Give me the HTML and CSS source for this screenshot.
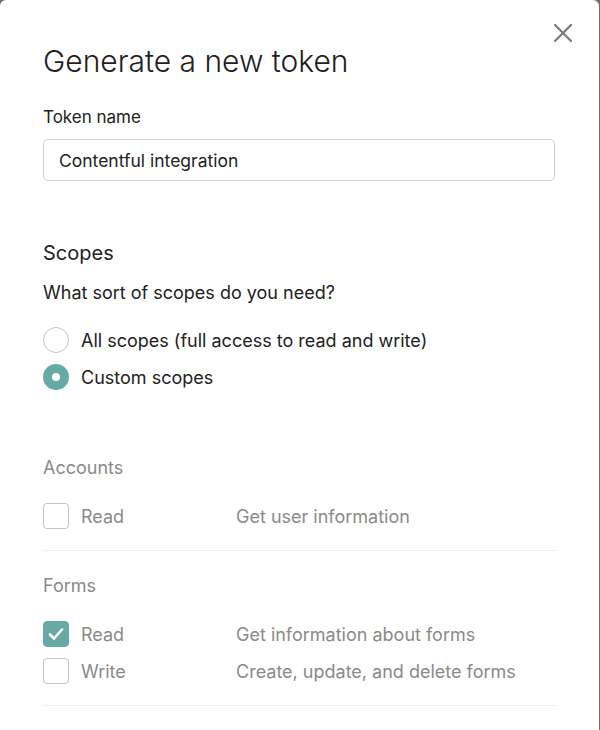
FILE: index.html
```html
<!DOCTYPE html>
<html lang="en">
<head>
<meta charset="utf-8">
<link rel="stylesheet" href="styles.css">
</head>
<body>
<div class="modal">
  <button class="close" aria-label="Close">
    <svg width="18" height="18" viewBox="0 0 18 18"><path d="M1 1 L17 17 M17 1 L1 17" stroke="#7a7a7a" stroke-width="2.2" stroke-linecap="square" fill="none"/></svg>
  </button>
  <h1 class="title">Generate a new token</h1>
  <label class="field-label">Token name</label>
  <div class="input">Contentful integration</div>

  <h2 class="section-title">Scopes</h2>
  <p class="question">What sort of scopes do you need?</p>
  <div class="radios">
    <div class="radio-row"><span class="radio"></span><span>All scopes (full access to read and write)</span></div>
    <div class="radio-row"><span class="radio checked"></span><span>Custom scopes</span></div>
  </div>

  <div class="group">
    <div class="group-title">Accounts</div>
    <div class="scope-row"><span class="check"></span><span class="scope-name">Read</span><span class="scope-desc">Get user information</span></div>
  </div>
  <div class="group">
    <div class="group-title">Forms</div>
    <div class="scope-row"><span class="check checked"><svg width="16" height="14" viewBox="0 0 16 14"><path d="M2 7.5 L6 11.5 L14 2.5" stroke="#fff" stroke-width="2.6" fill="none" stroke-linecap="round" stroke-linejoin="round"/></svg></span><span class="scope-name">Read</span><span class="scope-desc">Get information about forms</span></div>
    <div class="scope-row"><span class="check"></span><span class="scope-name">Write</span><span class="scope-desc">Create, update, and delete forms</span></div>
  </div>
</div>
</body>
</html>
```
FILE: styles.css
```css
* { box-sizing: border-box; }
html, body { margin: 0; padding: 0; }
body {
  background: #6f6f6f;
  width: 600px;
  height: 730px;
  overflow: hidden;
  font-family: "Inter", "Noto Sans", sans-serif;
}
.modal {
  position: relative;
  width: 599px;
  height: 730px;
  background: #fff;
  border-radius: 6px 6px 0 0;
  padding: 45px 44px 0 43px;
  color: #222;
}
.close {
  position: absolute;
  top: 24px;
  right: 27px;
  width: 18px;
  height: 18px;
  padding: 0;
  border: 0;
  background: none;
  display: flex;
}
.title {
  margin: 0;
  font-size: 30px;
  font-weight: 300;
  line-height: 32px;
  color: #1e1e1e;
}
.field-label {
  display: block;
  margin-top: 30px;
  font-size: 17px;
  line-height: 20px;
  color: #222;
}
.input {
  margin-top: 12px;
  height: 42px;
  border: 1px solid #cfcfcf;
  border-radius: 5px;
  padding: 0 15px;
  display: flex;
  align-items: center;
  font-size: 17.5px;
  color: #222;
}
.section-title {
  margin: 60px 0 0;
  font-size: 20px;
  font-weight: 400;
  line-height: 24px;
}
.question {
  margin: 18px 0 0;
  font-size: 18px;
  line-height: 20px;
}
.radios {
  margin-top: 24px;
  display: flex;
  flex-direction: column;
  gap: 11px;
}
.radio-row {
  display: flex;
  align-items: center;
  gap: 12px;
  font-size: 18px;
  height: 26px;
}
.radio {
  width: 26px;
  height: 26px;
  border-radius: 50%;
  border: 1.5px solid #c4c4c4;
  flex: none;
}
.radio.checked {
  border: 9px solid #67aaa5;
  background: #fff;
}
.group {
  border-bottom: 1px solid #ececec;
  padding-bottom: 21px;
}
.group-title {
  padding-top: 68px;
  font-size: 18px;
  line-height: 20px;
  color: #8a8a8a;
  margin-bottom: 25px;
}
.group + .group .group-title { padding-top: 25px; margin-bottom: 25px; }
.scope-row {
  display: grid;
  grid-template-columns: 26px 143px 1fr;
  column-gap: 12px;
  align-items: center;
  height: 26px;
  margin-bottom: 11px;
  font-size: 18px;
  color: #8a8a8a;
}
.scope-row:last-child { margin-bottom: 0; }
.check {
  width: 26px;
  height: 26px;
  border: 1.5px solid #c4c4c4;
  border-radius: 4px;
  display: flex;
  align-items: center;
  justify-content: center;
}
.check.checked {
  background: #67aaa5;
  border-color: #67aaa5;
}
```
